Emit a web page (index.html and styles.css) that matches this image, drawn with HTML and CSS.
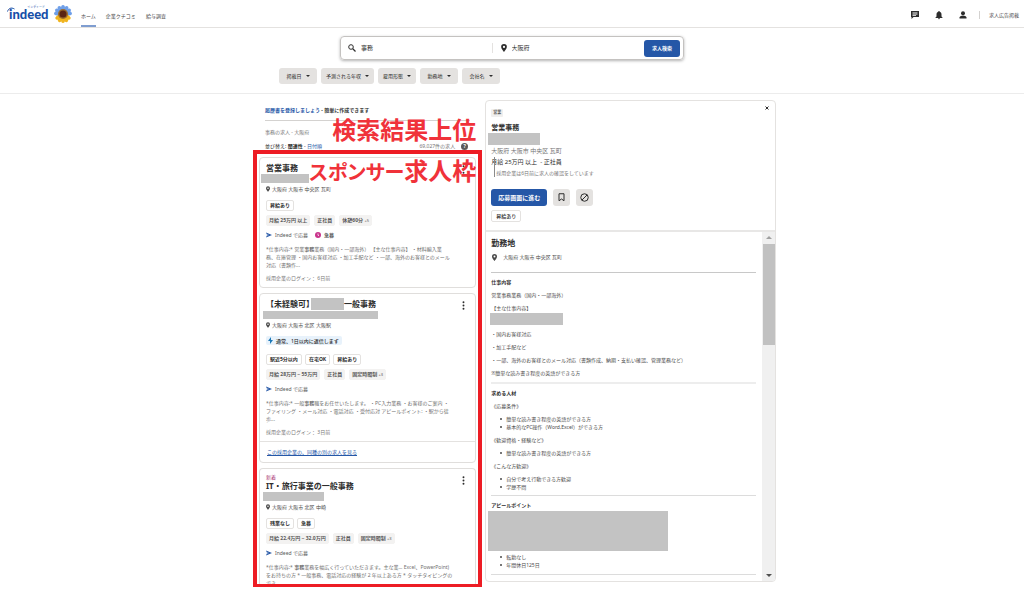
FILE: index.html
```
<!DOCTYPE html>
<html lang="ja">
<head>
<meta charset="utf-8">
<meta name="viewport" content="width=device-width, initial-scale=1">
<title>事務の求人 - 大阪府 | Indeed</title>
<link rel="stylesheet" href="styles.css">
</head>
<body>
<svg class="defs" aria-hidden="true">
  <symbol id="pin" viewBox="0 0 10 14"><path fill-rule="evenodd" d="M5 0a5 5 0 0 0-5 5c0 3.600 5 9 5 9s5-5.400 5-9a5 5 0 0 0-5-5zm0 3.200a1.900 1.900 0 1 1 0 3.800 1.900 1.900 0 0 1 0-3.800z"/></symbol>
  <symbol id="send" viewBox="0 0 14 12"><path d="M0 0l14 6L0 12l2-5 6-1-6-1z"/></symbol>
  <symbol id="dots" viewBox="0 0 4 14"><circle cx="2" cy="2" r="1.500"/><circle cx="2" cy="7" r="1.500"/><circle cx="2" cy="12" r="1.500"/></symbol>
</svg>

<header class="topbar">
  <a class="logo" href="#">
    <svg class="logo-arc" viewBox="0 0 16 12" aria-hidden="true"><path d="M1 9C3 3 8 0 15 4" fill="none" stroke="#164fa8" stroke-width="2"/></svg>
    <span class="logo-ruby">インディード</span>
    <span class="logo-name">indeed</span>
  </a>
  <svg class="flower" viewBox="0 0 36 36" aria-hidden="true">
    <g fill="#6f9fe8"><ellipse cx="18" cy="6" rx="4" ry="6"/><ellipse cx="18" cy="6" rx="4" ry="6" transform="rotate(30 18 18)"/><ellipse cx="18" cy="6" rx="4" ry="6" transform="rotate(60 18 18)"/><ellipse cx="18" cy="6" rx="4" ry="6" transform="rotate(-30 18 18)"/><ellipse cx="18" cy="6" rx="4" ry="6" transform="rotate(-60 18 18)"/><ellipse cx="18" cy="6" rx="4" ry="6" transform="rotate(-85 18 18)"/><ellipse cx="18" cy="6" rx="4" ry="6" transform="rotate(85 18 18)"/></g>
    <g fill="#f0b41f"><ellipse cx="18" cy="30" rx="4" ry="6"/><ellipse cx="18" cy="30" rx="4" ry="6" transform="rotate(28 18 18)"/><ellipse cx="18" cy="30" rx="4" ry="6" transform="rotate(56 18 18)"/><ellipse cx="18" cy="30" rx="4" ry="6" transform="rotate(-28 18 18)"/><ellipse cx="18" cy="30" rx="4" ry="6" transform="rotate(-56 18 18)"/></g>
    <circle cx="18" cy="18" r="10" fill="#9a6a2c"/><circle cx="18" cy="18" r="7" fill="#5a2413"/>
  </svg>
  <nav class="nav">
    <a class="active" href="#">ホーム</a>
    <a href="#">企業クチコミ</a>
    <a href="#">給与調査</a>
  </nav>
  <div class="tools">
    <button class="plain" aria-label="メッセージ"><svg width="8" height="8" viewBox="0 0 16 16"><path fill-rule="evenodd" d="M0 0h16v12H5l-4 4V12H0zM3 3v1.500h10V3zM3 5.500V7h10V5.500zM3 8v1.500h7V8z"/></svg></button>
    <button class="plain" aria-label="通知"><svg width="8" height="8" viewBox="0 0 16 16"><path d="M8 0c1 0 1.500.600 1.500 1.500C12 2.200 13 4.500 13 7v4l2 2v1H1v-1l2-2V7c0-2.500 1-4.800 3.500-5.500C6.500.600 7 0 8 0zM6 14.500h4a2 2 0 0 1-4 0z"/></svg></button>
    <button class="plain" aria-label="アカウント"><svg width="8" height="8" viewBox="0 0 16 16"><circle cx="8" cy="4.500" r="4"/><path d="M1 15v-2c0-2.600 4.500-4 7-4s7 1.400 7 4v2z"/></svg></button>
    <a class="post" href="#">求人広告掲載</a>
  </div>
</header>

<section class="searchbar">
  <form class="search">
    <label class="field" for="what"><svg width="8" height="8" viewBox="0 0 16 16" aria-label="キーワード"><circle cx="6" cy="6" r="4.600" fill="none" stroke="#2d2d2d" stroke-width="2"/><path d="M9.500 9.500l5.500 5.500" stroke="#2d2d2d" stroke-width="2.400"/></svg><input id="what" type="text" value="事務"></label>
    <label class="field where" for="where"><svg width="6" height="8" aria-label="勤務地"><use href="#pin"/></svg><input id="where" type="text" value="大阪府"></label>
    <button class="primary find" type="button">求人検索</button>
  </form>
  <div class="filters">
    <button>掲載日<i></i></button>
    <button>予測される年収<i></i></button>
    <button>雇用形態<i></i></button>
    <button>勤務地<i></i></button>
    <button>会社名<i></i></button>
  </div>
</section>

<main class="main">
  <section class="results">
    <p class="resume"><a href="#">履歴書を登録しましょう</a> - 簡単に作成できます</p>
    <p class="query">事務の求人 - 大阪府</p>
    <div class="sort">
      <span>並び替え: <b>関連性</b> - <a href="#">日付順</a></span>
      <span class="count">69,027件の求人 <span class="help">?</span></span>
    </div>

    <div class="cards">
      <article class="card">
        <button class="plain menu" aria-label="メニュー"><svg width="3" height="9"><use href="#dots"/></svg></button>
        <h2>営業事務</h2>
        <div class="mask mask-a"></div>
        <p class="place"><svg width="4" height="6"><use href="#pin"/></svg>大阪府 大阪市 中央区 瓦町</p>
        <div class="badges"><span>昇給あり</span></div>
        <div class="chips"><span>月給 25万円 以上</span><span>正社員</span><span>休憩60分 <small>+5</small></span></div>
        <p class="apply"><svg width="6" height="6"><use href="#send"/></svg>Indeed で応募 <svg class="clock" width="6" height="6" viewBox="0 0 12 12"><circle cx="6" cy="6" r="6" fill="#c9348c"/><path d="M6 3v3.500l2 1" fill="none" stroke="#fff" stroke-width="1.500"/></svg><b>急募</b></p>
        <p class="snippet">*仕事内容:* 営業<b>事務</b>業務（国内・一部海外） 【主な仕事内容】 ・材料輸入業<br>務、在庫管理 ・国内お客様対応 ・加工手配など ・一部、海外のお客様とのメール<br>対応（書類作...</p>
        <p class="login">採用企業のログイン： 6日前</p>
      </article>

      <article class="card">
        <button class="plain menu" aria-label="メニュー"><svg width="3" height="9"><use href="#dots"/></svg></button>
        <h2>【未経験可】<span class="mask mask-inline"></span>一般事務</h2>
        <div class="mask mask-b"></div>
        <p class="place"><svg width="4" height="6"><use href="#pin"/></svg>大阪府 大阪市 北区 大阪駅</p>
        <p class="reply"><svg width="5" height="7" viewBox="0 0 10 14"><path d="M6 0L0 8h4v6l6-8H6z" fill="#1a78b8"/></svg>通常、1日以内に返信します</p>
        <div class="badges after-reply"><span>駅近5分以内</span><span>在宅OK</span><span>昇給あり</span></div>
        <div class="chips"><span>月給 28万円 ~ 55万円</span><span>正社員</span><span>固定時間制 <small>+3</small></span></div>
        <p class="apply"><svg width="6" height="6"><use href="#send"/></svg>Indeed で応募</p>
        <p class="snippet">*仕事内容:* 一般<b>事務</b>職をお任せいたします。 ・PC入力業務 ・お客様のご案内 ・<br>ファイリング ・メール対応 ・電話対応 ・受付応対 アピールポイント: ・駅から徒<br>歩...</p>
        <p class="login">採用企業のログイン： 3日前</p>
        <p class="more"><a href="#">この採用企業の、同種の別の求人を見る</a></p>
      </article>

      <article class="card last">
        <button class="plain menu" aria-label="メニュー"><svg width="3" height="9"><use href="#dots"/></svg></button>
        <p class="new">新着</p>
        <h2>IT・旅行事業の一般事務</h2>
        <div class="mask mask-c"></div>
        <p class="place"><svg width="4" height="6"><use href="#pin"/></svg>大阪府 大阪市 北区 中崎</p>
        <div class="badges"><span>残業なし</span><span>急募</span></div>
        <div class="chips"><span>月給 22.4万円 ~ 32.0万円</span><span>正社員</span><span>固定時間制 <small>+3</small></span></div>
        <p class="apply"><svg width="6" height="6"><use href="#send"/></svg>Indeed で応募</p>
        <p class="snippet">*仕事内容:* <b>事務</b>業務を幅広く行っていただきます。主な業... Excel、PowerPoint)<br>をお持ちの方 * 一般事務、電話対応の経験が 2 年以上ある方 * タッチタイピングの<br>でき...</p>
      </article>

      <div class="frame"></div>
      <p class="note note-top">検索結果上位</p>
      <p class="note note-card"><span class="kana">スポンサー</span>求人枠</p>
    </div>
  </section>

  <section class="detail">
    <div class="detail-head">
      <div class="tag-row"><span class="tag">営業</span><button class="plain close" aria-label="閉じる"><svg width="4" height="4" viewBox="0 0 8 8"><path d="M1 1l6 6M7 1L1 7" stroke="#2d2d2d" stroke-width="2"/></svg></button></div>
      <h1>営業事務</h1>
      <div class="mask mask-d"></div>
      <div class="facts">
        <p class="muted">大阪府 大阪市 中央区 瓦町</p>
        <p>月給 25万円 以上 &nbsp;- 正社員</p>
        <p class="confirm">採用企業は6日前に求人の確認をしています</p>
      </div>
      <div class="actions">
        <button class="primary">応募画面に進む</button>
        <button class="square" aria-label="保存"><svg width="7" height="9" viewBox="0 0 14 18"><path d="M2 1.500h10v14l-5-3.500-5 3.500z" fill="none" stroke="#2d2d2d" stroke-width="2"/></svg></button>
        <button class="square" aria-label="興味なし"><svg width="9" height="9" viewBox="0 0 18 18"><g fill="none" stroke="#2d2d2d" stroke-width="2"><circle cx="9" cy="9" r="7.500"/><path d="M4 14L14 4"/></g></svg></button>
      </div>
      <div class="badges"><span>昇給あり</span></div>
    </div>
    <div class="detail-body">
      <div class="content">
        <h2>勤務地</h2>
        <p class="where-line"><svg width="5" height="7"><use href="#pin"/></svg>大阪府 大阪市 中央区 瓦町</p>
        <hr class="dark">
        <h3>仕事内容</h3>
        <p>営業事務業務（国内・一部海外）</p>
        <p>【主な仕事内容】</p>
        <div class="mask mask-e"></div>
        <p>・国内お客様対応</p>
        <p>・加工手配など</p>
        <p>・一部、海外のお客様とのメール対応（書類作成、納期・支払い確認、管理業務など）</p>
        <p>※簡単な読み書き程度の英語ができる方</p>
        <hr class="thick">
        <h3>求める人材</h3>
        <p>《応募条件》</p>
        <ul><li>簡単な読み書き程度の英語ができる方</li><li>基本的なPC操作（Word,Excel）ができる方</li></ul>
        <p>《歓迎資格・経験など》</p>
        <ul><li>簡単な読み書き程度の英語ができる方</li></ul>
        <p>《こんな方歓迎》</p>
        <ul><li>自分で考え行動できる方歓迎</li><li>学歴不問</li></ul>
        <hr>
        <h3>アピールポイント</h3>
        <div class="mask mask-f"></div>
        <ul class="tight"><li>転勤なし</li><li>年間休日125日</li></ul>
        <hr class="end">
      </div>
      <div class="scroll" aria-hidden="true"><span class="arrow up"></span><span class="thumb"></span><span class="arrow down"></span></div>
    </div>
  </section>
</main>
</body>
</html>
```
FILE: styles.css
```
* { box-sizing: border-box; margin: 0; padding: 0; }
body {
  background: #fff;
  color: #2d2d2d;
  font: 5px/8px "Noto Sans", "Noto Sans CJK JP", sans-serif;
}
.defs { display: none; }
svg { display: block; flex: none; overflow: visible; fill: #2d2d2d; }
a { color: #2557a7; text-decoration: none; }
button, input { font: inherit; color: inherit; border: 0; background: none; }
button { display: flex; align-items: center; justify-content: center; flex: none; }
ul { list-style: none; }
.mask { background: #c3c3c3; }
.primary { background: #2557a7; color: #fff; font-weight: 700; border-radius: 3px; height: 17px; }

/* top bar */
.topbar { display: flex; align-items: center; height: 28px; padding: 0 3px 0 9px; border-bottom: 1px solid #e4e2e0; }
.logo { position: relative; width: 38px; color: #164fa8; }
.logo-name { display: block; font: 900 13px/14px Lato, sans-serif; }
.logo-ruby { position: absolute; right: 2px; top: -2px; font-size: 3px; line-height: 4px; }
.logo-arc { position: absolute; left: -2px; top: 0; width: 8px; height: 6px; }
.flower { width: 18px; height: 18px; margin: 0 9px 0 7px; }
.nav { display: flex; gap: 10px; align-self: stretch; }
.nav a { color: #4a4a4a; padding-top: 12px; }
.nav .active { border-bottom: 2px solid #7f9dd0; }
.tools { display: flex; align-items: center; gap: 16px; margin-left: auto; padding-top: 3px; }
.post { color: #4a4a4a; border-left: 1px solid #d4d2d0; padding: 0 2px 0 9px; margin-left: -4px; }

/* search */
.searchbar { border-bottom: 1px solid #ececec; padding: 8px 0 9px; }
.search {
  display: flex; align-items: center; max-width: 344px; height: 24px; margin: 0 auto; padding: 0 3px 0 7px;
  border: 1px solid #c4c2c0; border-radius: 4px; box-shadow: 0 1px 3px rgba(0, 0, 0, .3);
}
.field { display: flex; align-items: center; gap: 5px; flex: 1; height: 10px; font-size: 6px; min-width: 0; }
.field input { flex: 1; min-width: 0; outline: 0; }
.where { border-left: 1px solid #e4e2e0; padding-left: 8px; }
.find { width: 36px; }
.filters { display: flex; gap: 4px; max-width: 466px; margin: 8px auto 0; }
.filters button { min-width: 38px; height: 16px; padding: 0 5px; gap: 4px; background: #e4e2e0; border-radius: 3px; }
.filters i { border: 2px solid transparent; border-top-color: #2d2d2d; border-bottom: 0; }

/* two columns */
.main { display: flex; align-items: flex-start; gap: 9px; max-width: 528px; margin: 0 auto; padding: 6px 0 0 11px; }
.results { flex: 218; min-width: 0; }
.detail { flex: 290; min-width: 0; }
.resume { font-weight: 700; margin: 0 6px; padding: 6px 0; border-bottom: 1px solid #d4d2d0; }
.query { color: #767676; padding: 7px 6px 0; }
.sort { display: flex; justify-content: space-between; padding: 6px 8px 7px 6px; }
.count { display: flex; align-items: center; gap: 6px; color: #767676; }
.help { width: 7px; height: 7px; border-radius: 50%; background: #595959; color: #fff; font-weight: 700; line-height: 7px; text-align: center; }

/* result cards */
.cards { position: relative; display: flex; flex-direction: column; gap: 5px; }
.card { position: relative; border: 1px solid #e0dedc; border-radius: 4px; padding: 5px 6px; }
.card.last { padding-bottom: 0; border-bottom: 0; }
.card h2 { display: flex; align-items: center; height: 10px; font-size: 8px; line-height: 10px; }
.plain.menu { position: absolute; right: 10px; top: 7px; }
.mask-a { width: 48px; height: 9px; margin: 1px 0 0 -5px; }
.mask-b { width: 115px; height: 8px; margin: 2px 0 0 -3px; }
.mask-c { width: 61px; height: 9px; margin: 1px 0 0 -3px; }
.mask-inline { width: 33px; height: 12px; margin-left: -3px; }
.place { display: flex; align-items: center; gap: 2px; margin-top: 2px; color: #4a4a4a; }
.place svg { fill: #4a4a4a; }
.badges, .chips { display: flex; gap: 3px; }
.badges { margin-top: 7px; }
.chips { gap: 4px; margin-top: 4px; }
.badges span, .chips span { height: 11px; padding: 0 3px; line-height: 9px; font-weight: 700; border: 1px solid #e4e2e0; border-radius: 2px; }
.chips span { padding: 0 2px; background: #f3f2f1; border-color: #f3f2f1; color: #595959; }
.chips small { font-size: 4px; font-weight: 400; }
.reply { display: flex; align-items: center; gap: 3px; width: max-content; height: 9px; margin-top: 7px; padding: 0 3px 0 2px; background: #e8f2fb; border-radius: 2px; font-weight: 500; }
.badges.after-reply { margin-top: 9px; }
.apply { display: flex; align-items: center; gap: 3px; margin-top: 5px; color: #595959; }
.apply svg { fill: #2557a7; }
.apply .clock { margin-left: 4px; }
.snippet { margin-top: 6px; color: #6f6f6f; white-space: nowrap; }
.login { margin-top: 5px; color: #767676; }
.card .more { margin: 5px -6px -5px; padding: 6px 7px; border-top: 1px solid #e4e2e0; }
.more a { text-decoration: underline; }
.new { color: #a8326e; line-height: 6px; margin-bottom: 1px; }

/* red annotations over the list */
.frame { position: absolute; inset: -7px -6px -1px; border: 4px solid #ed1c24; }
.note { position: absolute; right: 0; font-size: 24px; line-height: 28px; font-weight: 700; color: #f0323a; white-space: nowrap; font-feature-settings: "palt"; }
.note .kana { font-size: 20px; }
.note-top { top: -41px; }
.note-card { top: 0; }

/* job detail */
.detail { border: 1px solid #e4e2e0; border-radius: 4px; overflow: hidden; }
.detail-head { padding: 4px 6px 8px 5px; border-bottom: 2px solid #e8e7e6; }
.tag-row { display: flex; justify-content: space-between; align-items: flex-start; }
.tag { margin-top: 4px; height: 8px; padding: 0 2px; background: #f0efee; border-radius: 1px; font-size: 4px; font-weight: 700; color: #595959; }
.plain.close { height: 6px; }
.detail h1 { margin-top: 6px; font-size: 7px; line-height: 10px; }
.mask-d { width: 52px; height: 12px; margin-left: -3px; }
.facts { position: relative; font-size: 6px; line-height: 10px; }
.facts::before { content: ""; position: absolute; left: 3px; top: 11px; width: 1px; height: 20px; background: #8a8a8a; }
.facts p { margin-top: 1px; }
.facts .muted { color: #767676; }
.facts .confirm { font-size: 5px; padding-left: 5px; color: #767676; }
.actions { display: flex; gap: 6px; margin-top: 11px; }
.actions .primary { width: 56px; font-size: 6px; }
.square { width: 17px; height: 17px; background: #e4e2e0; border-radius: 3px; }
.detail .badges { margin-top: 4px; }
.detail .badges span { height: 12px; padding: 0 4px; line-height: 10px; font-weight: 500; }
.detail-body { display: flex; }
.content { flex: 1; min-width: 0; padding: 6px 6px 6px 5px; color: #4a4a4a; }
.content h2 { font-size: 8px; line-height: 10px; color: #2d2d2d; }
.content h3 { margin-top: 5px; font-size: 5px; line-height: 8px; color: #2d2d2d; }
.content p, .content ul { margin-top: 5px; }
.content .where-line { display: flex; align-items: center; gap: 6px; margin-top: 5px; padding-left: 1px; }
.where-line svg { fill: #4a4a4a; }
.content hr { border: 0; height: 1px; margin-top: 4px; background: #dcdcdc; }
.content .dark { margin-top: 11px; background: #c8c8c8; }
.content .thick { height: 2px; margin-top: 5px; background: #ededed; }
.content .end { margin-top: 5px; }
.content li { display: flex; align-items: center; gap: 4px; padding-left: 9px; }
.content li::before { content: ""; width: 2px; height: 2px; border-radius: 50%; background: #4a4a4a; }
.mask-e { width: 73px; height: 12px; margin: 1px 0 0 -1px; }
.mask-f { width: 180px; height: 40px; margin: 2px 0 0 -3px; }
.content .tight { margin-top: 2px; }
.scroll { display: flex; flex-direction: column; align-items: center; width: 13px; padding: 4px 0; background: #f0f0f0; }
.thumb { width: 12px; height: 101px; margin: 5px 0 auto; background: #c1c1c1; }
.arrow { border: 3px solid transparent; }
.up { border-top: 0; border-bottom-color: #a0a0a0; }
.down { border-bottom: 0; border-top-color: #505050; }
```
